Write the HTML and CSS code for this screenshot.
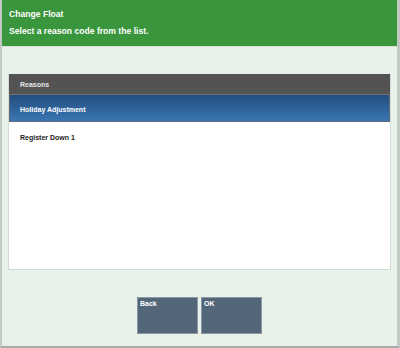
FILE: index.html
```html
<!DOCTYPE html>
<html lang="en">
<head>
    <meta charset="UTF-8">
    <meta name="viewport" content="width=device-width, initial-scale=1.0">
    <title>Change Float</title>
    <link rel="stylesheet" href="styles.css">
</head>
<body>
    <div class="screen">
        <div class="title-bar">
            <h1>Change Float</h1>
            <p>Select a reason code from the list.</p>
        </div>

        <div class="content">
            <div class="list">
                <div class="list-head">Reasons</div>
                <div class="list-item selected">Holiday Adjustment</div>
                <div class="list-item">Register Down 1</div>
            </div>
        </div>

        <div class="buttons">
            <a href="#" class="btn">Back</a>
            <a href="#" class="btn">OK</a>
        </div>
    </div>
</body>
</html>
```

FILE: styles.css
```css
* {
    box-sizing: border-box;
    margin: 0;
    padding: 0;
    font-family: 'Liberation Sans', Arial, sans-serif;
}
body {
    width: 400px;
    height: 348px;
    background-color: #e8f2ea;
}
.screen {
    height: 348px;
    display: flex;
    flex-direction: column;
    border-left: 2px solid #c4c8c4;
    border-right: 3px solid #c4c8c4;
    border-bottom: 2px solid #a8aaa8;
}
.title-bar {
    height: 47px;
    background-color: #3a963c;
    border-bottom: 1px solid #d4e4d6;
    color: #fff;
    padding: 8px 0 0 7px;
}
.title-bar h1 {
    font-size: 8.6px;
    font-weight: bold;
    line-height: 12px;
}
.title-bar p {
    font-size: 8.6px;
    font-weight: bold;
    line-height: 12px;
    margin-top: 5px;
}
.content {
    padding: 27px 6px 0 6px;
}
.list {
    height: 196px;
    background-color: #fff;
    border: 1px solid #d4dad4;
    border-top: none;
}
.list-head {
    height: 21px;
    background-color: #535353;
    color: #e8e8e8;
    font-size: 7px;
    font-weight: bold;
    padding: 7px 0 0 11px;
    border-bottom: 1px solid #6e7074;
}
.list-item {
    height: 26px;
    font-size: 7px;
    font-weight: bold;
    color: #222;
    padding: 12px 0 0 11px;
}
.list-item.selected {
    height: 27px;
    color: #fff;
    background: linear-gradient(#224e7e, #3a76b4);
    border: 1px solid #606a74;
    border-top: none;
    padding: 11px 0 0 10px;
}
.buttons {
    display: flex;
    justify-content: center;
    gap: 3px;
    margin-top: 27px;
}
.btn {
    width: 61px;
    height: 37px;
    background-color: #536779;
    border: 1px solid #8a98a4;
    color: #fff;
    font-size: 7px;
    font-weight: bold;
    text-decoration: none;
    padding: 2px 0 0 2px;
}
```
